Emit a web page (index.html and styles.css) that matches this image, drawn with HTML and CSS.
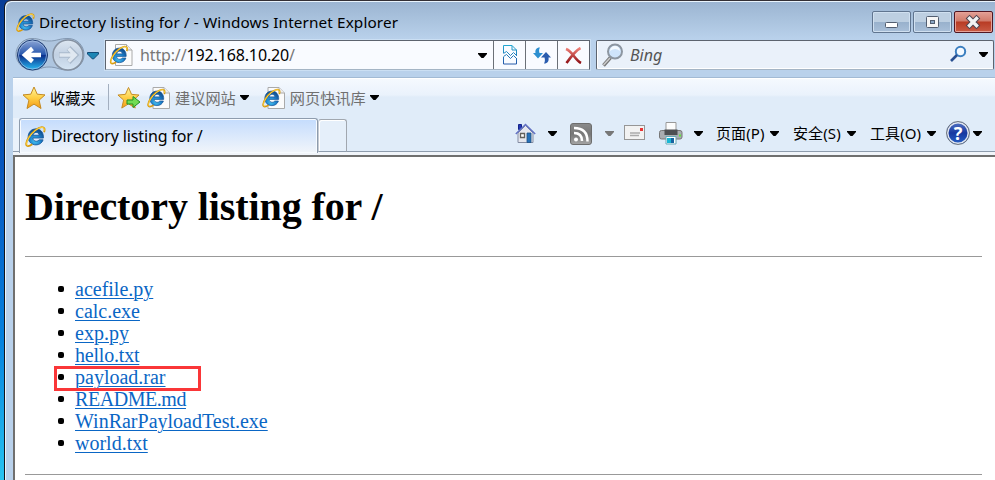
FILE: index.html
```html
<!DOCTYPE html>
<html lang="zh-CN">
<head>
<meta charset="utf-8">
<title>Directory listing for /</title>
<link rel="stylesheet" href="styles.css">
</head>
<body>
<svg class="defs" width="0" height="0" aria-hidden="true">
  <defs>
    <radialGradient id="blue" cx=".45" cy=".75" r=".75"><stop offset="0" stop-color="#46c5f4"/><stop offset=".55" stop-color="#1878c4"/><stop offset="1" stop-color="#124884"/></radialGradient>
    <linearGradient id="orb" x2="0" y2="1"><stop offset="0" stop-color="#8ea6d6"/><stop offset=".48" stop-color="#2857ad"/><stop offset=".52" stop-color="#0b2f8c"/><stop offset="1" stop-color="#28bdf4"/></linearGradient>
    <linearGradient id="pale" x2="0" y2="1"><stop offset="0" stop-color="#dce6f1"/><stop offset=".5" stop-color="#c1d0e2"/><stop offset="1" stop-color="#d4e4f3"/></linearGradient>
    <linearGradient id="gold" x2="0" y2="1"><stop offset="0" stop-color="#fff6a0"/><stop offset=".5" stop-color="#ffcf45"/><stop offset="1" stop-color="#f39a16"/></linearGradient>
    <linearGradient id="red" x2="0" y2="1"><stop offset="0" stop-color="#f08078"/><stop offset="1" stop-color="#8f1015"/></linearGradient>
    <linearGradient id="teal" x2="0" y2="1"><stop offset="0" stop-color="#20a5d0"/><stop offset="1" stop-color="#2558a8"/></linearGradient>
    <linearGradient id="grey" x2="0" y2="1"><stop offset="0" stop-color="#8b8b8b"/><stop offset=".5" stop-color="#777"/><stop offset="1" stop-color="#a5a5a5"/></linearGradient>
    <symbol id="ie" viewBox="0 0 22 22">
      <path d="M19.3 12.6H8.2c.2 2.2 1.600 3.400 3.600 3.400 1.300 0 2.300-.5 3-1.500h4.200c-1.200 3.400-3.900 5.300-7.500 5.300-4.800 0-8.200-3.500-8.200-8.300s3.400-8.500 8.200-8.500c5 0 8.100 3.900 7.800 9.600zM8.300 9.700h6.600c-.2-1.900-1.400-3-3.200-3s-3 1.100-3.400 3z" fill="url(#blue)" stroke="#1b5a9c" stroke-width=".9"/>
      <path d="M20 6.500C21.200 3.200 20.300 1 17.500 1.200 13.500 1.500 7.500 6.300 4 11.800.8 16.800.3 20.800 3 21c1.500.1 3.200-.8 4.600-1.800" fill="none" stroke="#d99b10" stroke-width="1.900"/>
      <path d="M20 5C20.600 2.500 19.500 1.300 17.500 1.500 13.500 1.900 7.900 6.500 4.400 11.900 1.600 16.300.9 20 3 20.400" fill="none" stroke="#ffdb4e" stroke-width="1"/>
    </symbol>
    <symbol id="iepage" viewBox="0 0 24 24">
      <path d="M6 1.500h11l5.500 5.500v15.500H6z" fill="#fbfbfb" stroke="#aaa"/><path d="M17 1.500V7h5.500" fill="#eee" stroke="#aaa"/>
      <use href="#ie" x="0" y="2" width="19" height="20"/>
    </symbol>
    <symbol id="star" viewBox="0 0 24 24"><path d="M12 1l3.200 7.200 7.800.7-5.900 5.300 1.900 8.300-7-4.400-7 4.400 1.900-8.300L1 8.900l7.800-.7z" fill="url(#gold)" stroke="#c38a22" stroke-width="1" stroke-linejoin="round"/></symbol>
    <symbol id="down" viewBox="0 0 9 5"><path d="M0 0h9v1L5.500 5h-2L0 1z" fill="currentColor"/></symbol>
  </defs>
</svg>
<div class="desktop">
 <div class="window">
  <header class="titlebar">
    <svg class="title-icon"><use href="#ie"/></svg>
    <span class="title">Directory listing for / - Windows Internet Explorer</span>
    <div class="controls">
      <span class="control"><svg viewBox="0 0 39 22"><rect x="13.500" y="11.500" width="12" height="5" rx="1" fill="#fff" stroke="#525e70"/></svg></span>
      <span class="control"><svg viewBox="0 0 39 22"><rect x="13.500" y="5.500" width="12" height="11" rx="1" fill="#f6f6f6" stroke="#525e70"/><rect x="17.500" y="9.500" width="4" height="3" fill="#8ba7c5" stroke="#525e70"/></svg></span>
      <span class="control close"><svg viewBox="0 0 39 22"><path d="M15.500 7.500l7 7m0-7l-7 7" fill="none" stroke="#4d4450" stroke-width="5.400" stroke-linecap="square"/><path d="M15.500 7.500l7 7m0-7l-7 7" fill="none" stroke="#f2f2f2" stroke-width="3.400" stroke-linecap="square"/></svg></span>
    </div>
  </header>

  <div class="navrow">
    <svg class="travel" viewBox="0 0 72 37">
      <path d="M17 2.500C25 2.500 26 5 34 5S44 2.500 53 2.500c9 0 16 7 16 16S62 34 53 34s-11-3-19-3-9 3-17 3S1 27 1 18.500s7-16 16-16z" fill="#aec5df" stroke="#8398b1"/>
      <circle cx="17.500" cy="19" r="15" fill="url(#orb)" stroke="#1b386f"/><circle cx="17.500" cy="19" r="14" fill="none" stroke="#a7c3e8" opacity=".7"/>
      <path d="M26 19H10M17.500 12.500L10 19l7.500 6.500" fill="none" stroke="#fff" stroke-width="4.400"/>
      <circle cx="53" cy="19" r="15" fill="url(#pale)" stroke="#8490a0" stroke-width="1.500"/>
      <path d="M44 19h16M53.500 12l7 7-7 7" fill="none" stroke="#a9b9cb" stroke-width="5.400"/><path d="M44.500 19h15M53.500 12.500l6.500 6.500-6.500 6.500" fill="none" stroke="#e0e8f1" stroke-width="3.600"/>
    </svg>
    <svg class="recent" viewBox="0 0 12 8"><path d="M.5.500h11v1.500L6.500 7h-1L.5 2z" fill="#1c85b4" stroke="#124a77"/></svg>
    <div class="address">
      <svg class="page-icon"><use href="#iepage"/></svg>
      <span class="url">http://<b>192.168.10.20</b>/</span>
      <svg class="arrow"><use href="#down"/></svg>
      <span class="tool"><svg width="16" height="20" viewBox="0 0 16 20" fill="none" stroke="url(#teal)" stroke-width="1"><path d="M1.500 8V.5h8.500l4.500 4.500v6M10 .5V5h4.500M1.500 8.500l3-2 4 4 3-3 3 3M1.500 11.500l3-2 4 4 3-3 3 3M1.500 12v7h13v-6"/></svg></span>
      <span class="tool"><svg width="18" height="17" viewBox="0 0 18 17"><path d="M7 .5C3 .5 2 3 2.500 6H0l5 5.500L10 6H6.500C5.800 3.500 6 2 7 .5z" fill="#2c8fd0"/><path d="M11 16.500c4 0 5-2.500 4.500-6H18L13 5l-5 5.500h3.500c.7 2.500.5 4.500-.5 6z" fill="#2a5cae"/></svg></span>
      <span class="tool"><svg width="17" height="17" viewBox="0 0 17 17"><path d="M1 2c3 1 5.500 4 7.500 6.500C10.500 11 13 14.500 16 16M15.500 1C11.500 3 5 11 1.500 16" fill="none" stroke="url(#red)" stroke-width="2.600"/></svg></span>
    </div>
    <div class="search">
      <svg class="lens" viewBox="0 0 22 25"><path d="M1.500 22.500l7-8" stroke="#777" stroke-width="3.500"/><path d="M1.500 22l6.500-7" stroke="#ccc" stroke-width="1.500"/><circle cx="13" cy="8.500" r="7" fill="#cfe4fb" stroke="#8d96a1" stroke-width="2"/><path d="M8 8q5-4 10 0a5 5 0 0 0-10 0" fill="#f5faff"/></svg>
      <span class="bing">Bing</span>
      <svg class="go" viewBox="0 0 17 17"><circle cx="10.500" cy="6.500" r="4.700" fill="#f4f9ff" stroke="#3c7fc0" stroke-width="2"/><path d="M7 10l-6 6" stroke="#294f91" stroke-width="2.600"/></svg>
      <svg class="arrow"><use href="#down"/></svg>
    </div>
  </div>

  <div class="client">
    <div class="favorites">
      <svg class="star"><use href="#star"/></svg>
      <span class="fav-title">收藏夹</span>
      <i class="separator"></i>
      <svg class="star-add" viewBox="0 0 24 24"><use href="#star" width="23" height="24"/><path d="M10 14h6v-3.500l7 5.500-7 5.500V18h-6z" fill="#71dc53" stroke="#239124"/></svg>
      <svg class="fav-icon"><use href="#iepage"/></svg>
      <span class="fav-link">建议网站</span>
      <svg class="arrow"><use href="#down"/></svg>
      <svg class="fav-icon second"><use href="#iepage"/></svg>
      <span class="fav-link">网页快讯库</span>
      <svg class="arrow"><use href="#down"/></svg>
    </div>

    <div class="tabrow">
      <i class="tab-lead"></i>
      <div class="tab"><svg class="tab-icon"><use href="#ie"/></svg><span class="tab-title">Directory listing for /</span></div>
      <div class="newtab"></div>
      <div class="commands">
        <svg width="21" height="21" viewBox="0 0 21 21"><path d="M3.500 1.500h3v5h-3z" fill="#2338b4" stroke="#15248a"/><path d="M3 10l7.500-7.500L18 10v9.500H3z" fill="#e5e7ee" stroke="#858da3"/><path d="M.8 11L10.500 1.500 20.200 11" fill="none" stroke="#6372c4" stroke-width="1.500"/><path d="M5.500 10.500h4v4h-4z" fill="#fff" stroke="#62605c" stroke-width="1.300"/><path d="M12 10h4v9.500h-4z" fill="#2671b9" stroke="#205082" stroke-width=".8"/></svg>
        <svg class="arrow"><use href="#down"/></svg>
        <svg width="22" height="22" viewBox="0 0 22 22"><rect x=".5" y=".5" width="21" height="21" rx="2.500" fill="url(#grey)" stroke="#6d6d6d"/><circle cx="6" cy="16.500" r="2" fill="#fff"/><path d="M4 10q8 0 8 8M4 5q13.500 0 13.500 13.500" fill="none" stroke="#fff" stroke-width="2.500"/></svg>
        <svg class="arrow disabled"><use href="#down"/></svg>
        <svg class="mail" width="21" height="15" viewBox="0 0 21 15"><rect x=".5" y=".5" width="20" height="14" fill="#f2f2f2" stroke="#969696"/><path d="M6 8h10M6 10.500h9" stroke="#aaa" stroke-width="1.300"/><path d="M16 3h3v3h-3z" fill="#e83434"/></svg>
        <svg width="24" height="23" viewBox="0 0 24 23"><path d="M7 .5h10V9H7z" fill="#fcfcfc" stroke="#999"/><rect x=".5" y="8.500" width="22.500" height="8.500" rx="2" fill="#a9adb1" stroke="#777"/><path d="M5.500 7.500h13V13h-13z" fill="#4d4f52"/><path d="M7 14.500h10V22H7z" fill="#fff" stroke="#65a7b6"/><path d="M8 16h4v5H8z" fill="#18b6d5"/><path d="M12 16h3v5h-3z" fill="#1762a0"/><path d="M20 12.500h2v2h-2z" fill="#61e63b"/></svg>
        <svg class="arrow"><use href="#down"/></svg>
        <span class="menu">页面(P)</span><svg class="arrow"><use href="#down"/></svg>
        <span class="menu">安全(S)</span><svg class="arrow"><use href="#down"/></svg>
        <span class="menu">工具(O)</span><svg class="arrow"><use href="#down"/></svg>
        <span class="help">?</span><svg class="arrow"><use href="#down"/></svg>
      </div>
    </div>

    <main class="page">
      <h1><span>Directory listing for /</span></h1>
      <hr>
      <ul>
        <li><a href="#">acefile.py</a></li>
        <li><a href="#">calc.exe</a></li>
        <li><a href="#">exp.py</a></li>
        <li><a class="narrow" href="#">hello.txt</a></li>
        <li class="marked"><a href="#">payload.rar</a></li>
        <li><a class="caps" href="#">README.md</a></li>
        <li><a href="#">WinRarPayloadTest.exe</a></li>
        <li><a href="#">world.txt</a></li>
      </ul>
      <hr>
    </main>
  </div>
 </div>
</div>
</body>
</html>
```
FILE: styles.css
```css
*, *::before, *::after { box-sizing: border-box; }
body { margin: 0; width: 995px; height: 480px; overflow: hidden; font-family: "Noto Sans", "Noto Sans CJK SC", sans-serif; color: #000; }
.defs { position: absolute; }
svg { display: block; flex: none; }
span { white-space: nowrap; }
.desktop { height: 480px; padding-left: 4px; background: linear-gradient(#063b96, #0759c1 38%, #0580dd 70%, #28c4f1); }
.window { height: 480px; border-left: 1px solid #10151e; border-top: 1px solid #332f35; border-top-left-radius: 7px; background: linear-gradient(#9bb4d1, #a9c2dd 18px, #b9d1eb 38px); box-shadow: inset 1px 1px #e9f4fd; overflow: hidden; }
.titlebar { height: 39px; display: flex; align-items: flex-start; padding: 12px 0 0 11px; }
.title-icon { width: 19px; height: 19px; }
.title { margin-left: 4px; margin-top: -2px; font-size: 15.300px; line-height: 22px; letter-spacing: .12px; }
.controls { display: flex; gap: 2px; margin: -2px 2px 0 auto; }
.control { width: 39px; height: 22px; border: 1px solid #60758f; border-radius: 2px; box-shadow: inset 0 0 0 1px #d0e0f0; background: linear-gradient(#bdcfe1 0 48%, #98b1cc 50%, #a9c0d9); }
.control svg { width: 39px; height: 22px; margin: -1px; }
.close { border-color: #501622; box-shadow: inset 0 0 0 1px #e6a197; background: linear-gradient(#e2a096, #d17b6b 45%, #b83b24 50%, #c95b45); }
.navrow { height: 37px; display: flex; align-items: flex-start; padding-left: 10px; }
.travel { width: 72px; height: 37px; margin-top: -4px; }
.recent { width: 12px; height: 8px; margin: 12px 6px 0 0; }
.address { width: 485px; height: 30px; display: flex; align-items: center; border: 1px solid #5d646f; border-bottom-color: #a5b5c5; background: #f9fbff; box-shadow: 0 0 0 1px #cbdff3; }
.page-icon { width: 25px; height: 24px; margin-left: 3px; }
.url { margin-left: 6px; font-size: 16px; letter-spacing: -.14px; color: #777; }
.url b { font-weight: 400; color: #000; }
.arrow { width: 9px; height: 5px; color: #000; }
.arrow.disabled { color: #777; }
.address .arrow { margin-left: auto; margin-right: 6px; }
.tool { width: 32px; height: 28px; border-left: 1px solid #6b7077; display: flex; align-items: center; justify-content: center; }
.search { width: 398px; height: 30px; margin-left: 6px; display: flex; align-items: center; border: 1px solid #5d646f; border-bottom-color: #a5b5c5; border-radius: 2px; background: #eaf1fa; box-shadow: inset 1px -1px #fff; }
.lens { width: 22px; height: 25px; margin-left: 5px; }
.bing { margin-left: 6px; font-size: 16px; font-style: italic; color: #555; }
.go { width: 17px; height: 17px; margin-left: auto; margin-right: 12px; margin-top: -3px; }
.search .arrow { margin-right: 5px; margin-top: -1px; }
.client { margin-left: 8px; border-top: 1px solid #a2bad4; background: linear-gradient(#fff 0 1px, #f5f9fe 1px, #eaf2fc 17px, #e0ecf9 19px); }
.favorites { height: 40px; display: flex; align-items: center; padding-left: 9px; font-size: 15.200px; line-height: 22px; }
.favorites .arrow { margin-top: -1px; }
.star { width: 24px; height: 24px; }
.fav-title { margin-left: 4px; width: 47px; }
.separator { width: 1px; height: 26px; margin: -3px 8px 0 11px; background: #a3afbf; }
.star-add { width: 24px; height: 24px; }
.fav-icon { width: 24px; height: 24px; margin-left: 6px; }
.fav-link { margin: 0 4px; color: #707070; }
.second { margin-left: 13px; }
.tabrow { height: 37px; display: flex; align-items: flex-start; background: linear-gradient(transparent 33px, #8e9cad 33px 34px, #f1f5fa 34px); }
.tab-lead { width: 6px; height: 34px; background: #eaf2fb; border-bottom: 1px solid #8e9cad; }
.tab { width: 299px; height: 35px; display: flex; align-items: center; padding-left: 5px; border: 1px solid #8e9cad; border-bottom: 0; border-radius: 3px 3px 0 0; background: linear-gradient(#c4dcfd, #f1f5fa); box-shadow: inset 0 0 0 1px #f7fbff; }
.tab-icon { width: 21px; height: 21px; }
.tab-title { margin-left: 5px; font-size: 16px; letter-spacing: -.14px; }
.newtab { width: 29px; height: 33px; margin-top: 1px; border: 1px solid #a1a7af; border-left-color: #c5cbd4; border-bottom-color: #8e9cad; border-radius: 3px 3px 0 0; background: #e5effa; box-shadow: inset 1px 1px #fff; }
.commands { display: grid; grid-template-columns: 33px 22px 35px 19px 35px 35px 22px 54px 23px 54px 23px 57px 19px 27px 9px; margin-left: 168px; align-items: center; height: 31px; font-size: 15px; line-height: 22px; }
.mail { margin-top: -3px; }
.menu { font-size: 15px; margin-top: -1px; letter-spacing: .1px; }
.help { width: 24px; height: 24px; border: 1px solid #707780; border-radius: 50%; background: linear-gradient(#5676c5, #1738a0 50%, #2862c6); box-shadow: inset 0 0 0 1.500px #e1e6ef; color: #fff; font: bold 18px/22px "Noto Sans", sans-serif; text-align: center; margin-top: -1px; }
.page { height: 326px; border-top: 2px solid #70706f; border-left: 2px solid #70706f; background: #fff; padding: 0 13px 0 10px; font-family: "Liberation Serif", serif; font-size: 20px; line-height: 22px; }
h1 { margin: 26px 0 0; font-size: 40px; line-height: 48px; font-weight: 700; letter-spacing: -.09px; }
hr { height: 1px; margin: 25px 0 21px; border: 0; background: #999; }
ul { margin: 0; padding-left: 50px; list-style: none; }
li { height: 22px; position: relative; }
li::before { content: ""; position: absolute; left: -17px; top: 8px; width: 6px; height: 6px; border-radius: 2px; background: #000; }
a { color: #0a66c5; text-decoration: underline; text-decoration-thickness: 1px; text-underline-offset: 2px; }
.narrow { letter-spacing: -.2px; }
.caps { letter-spacing: -.45px; }
.marked::after { content: ""; position: absolute; left: -21px; top: 0; width: 147px; height: 25px; border: 3px solid #fa3638; }
ul + hr { margin: 20px 0 0; }
```
